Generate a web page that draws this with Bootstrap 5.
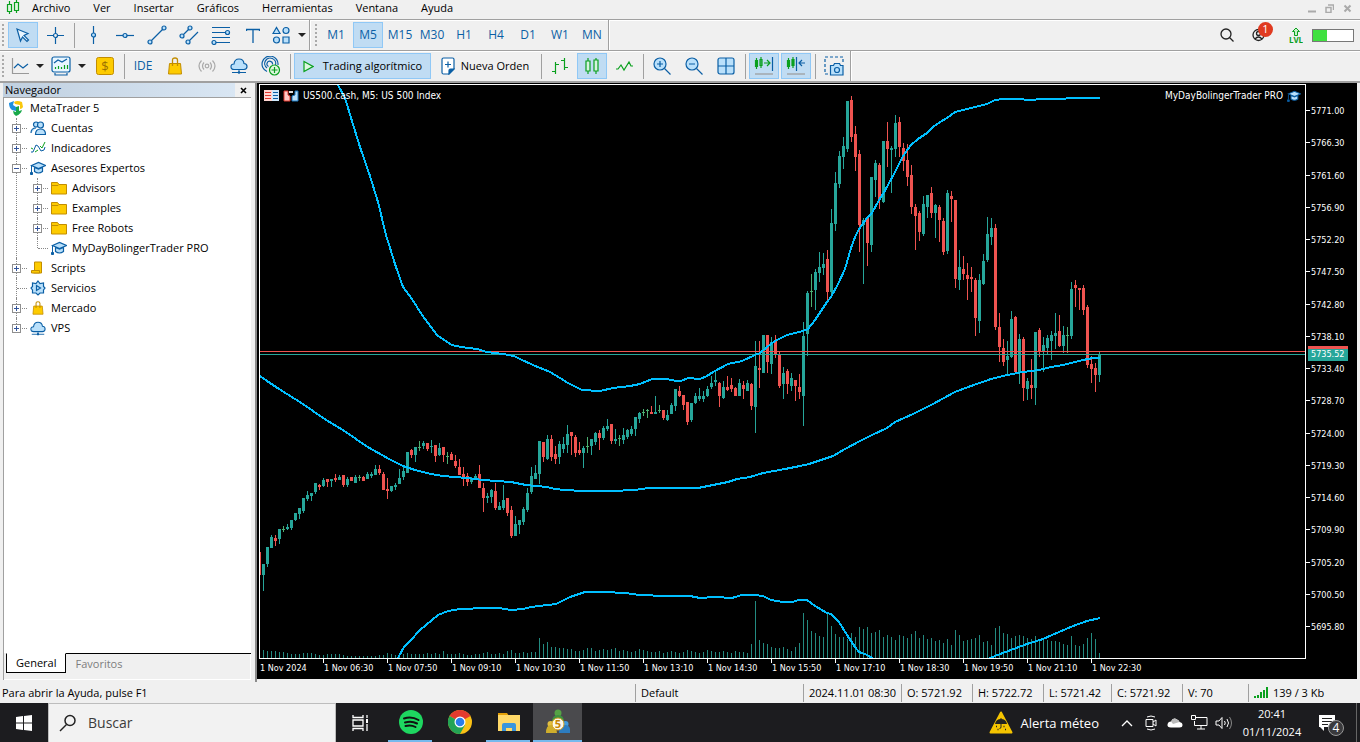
<!DOCTYPE html>
<html lang="es">
<head>
<meta charset="utf-8">
<meta name="viewport" content="width=device-width, initial-scale=1">
<title>MetaTrader 5</title>
<link rel="stylesheet" href="https://cdn.jsdelivr.net/npm/bootstrap@5.3.0/dist/css/bootstrap.min.css">
<style>
  :root { --ink:#0b5fa5; --sky:#b9e0fb; --leaf:#0aa01e; --line:#a0a0a0; --face:#f0f0f0; }
  body { font-family:"Open Sans","Noto Sans",sans-serif; font-size:11px; line-height:16px; color:#000; background:var(--face); overflow:hidden; }
  button, input { font:inherit; color:inherit; }
  button { background:none; border:0; padding:0; }
  svg { display:block; flex:none; }
  .ic { fill:none; stroke:var(--ink); stroke-width:1.2; }
  .f { fill:var(--sky); }
  .gr { stroke:var(--leaf); }
  .menu-bar { height:19px; }
  .menu-bar a { color:#000; text-decoration:none; line-height:16px; }
  .menu-links { gap:22px; font-size:11px; }
  .menu-links a { padding-right:1px; }
  .winctl { gap:9px; }
  .tool-row { height:31px; border-top:1px solid var(--line); box-shadow:inset 0 1px #fff; }
  .grip { width:7px; height:24px; background:radial-gradient(circle,#aaa 1px,transparent 1px) 1px 0/4px 4px repeat-y; }
  .tb { width:30px; height:26px; margin:0 1px; display:flex; align-items:center; justify-content:center; color:var(--ink); border:1px solid transparent; white-space:nowrap; }
  .tb.on { background:#c0dcf3; border-color:#90c8f6; }
  .tb.wide { width:39px; gap:7px; }
  .tb.shapes { width:38px; }
  .tb.tf, .tb.ide { font-size:12px; }
  .tb.algo { width:137px; color:#000; gap:9px; }
  .tb.order { width:104px; color:#000; gap:6px; }
  .vsep { width:6px; height:25px; background:linear-gradient(var(--line),var(--line)) 3px 0/1px 100% no-repeat; }
  .vend { width:4px; height:30px; border-left:1px solid var(--line); box-shadow:inset 1px 0 #fff; }
  .caret { width:0; height:0; border:4px solid transparent; border-top-color:#222; border-bottom:0; }
  .right-tools { padding-right:6px; }
  .right-tools .acct { margin-right:6px; }
  .acct-badge { left:6px; top:-6px; width:15px; height:15px; background:#e03a20; color:#fff; font-size:11px; line-height:14px; }
  .battery { width:42px; height:13px; border:1px solid #777; background:#fff; }
  .battery i { display:block; width:36%; height:100%; background:#3fe03f; }
  .work { border-top:2px solid var(--line); min-height:0; }
  .nav-pane { width:257px; padding:0 4px 2px 3px; border-right:2px solid #8c8c8c; }
  .nav-head { height:14px; }
  .nav-head span { background:linear-gradient(90deg,#c0d0e0,#d9e6f3); line-height:13px; padding-left:2px; margin-right:16px; }
  .tree-box { background:#fff; border-left:1px solid var(--line); border-top:1px solid var(--line); }
  .tree-box ul { list-style:none; margin:0; padding:0; }
  .tree-box li { position:relative; }
  .tree-box ul ul { margin-left:21px; }
  .tree-row { height:20px; display:flex; align-items:center; padding-left:8px; }
  .tree-row svg { margin-right:5px; }
  .rootrow { padding-left:4px; }
  .rootrow svg { margin-right:6px; }
  .tw { width:9px; height:9px; border:1px solid #8f8f8f; background:linear-gradient(#fff 3px,#33549a 3px,#33549a 4px,#fff 4px) 1px 0/5px 7px no-repeat #fff; margin-right:9px; position:relative; z-index:1; display:block; }
  .tw.plus::after { content:""; position:absolute; left:3px; top:1px; width:1px; height:5px; background:#33549a; }
  .tw.none { visibility:hidden; }
  .tree-box li::before { content:""; position:absolute; left:12px; top:0; bottom:0; border-left:1px dotted #888; }
  .tree-box li:last-child::before { bottom:auto; height:10px; }
  .tree-box li::after { content:""; position:absolute; left:13px; top:10px; width:10px; border-top:1px dotted #888; }
  .tabs { height:27px; box-shadow:inset -1px -1px #fff; border-left:1px solid var(--line); padding-left:2px; }
  .tabs button { height:20px; padding:0 9px; border-top:1px solid #000; color:#7d7d7d; }
  .tabs button.on { background:#fff; color:#000; border:1px solid #000; border-top-color:#fff; }
  .tabs .rest { border-top:1px solid #000; }
  .chart-pane { background:#000; color:#fff; font-family:"DejaVu Sans Condensed","DejaVu Sans",sans-serif; font-size:9px; line-height:11px; margin-right:3px; padding:1px 0 0 2px; margin-bottom:3px; }
  .chart-top { min-height:0; }
  .frame { border:1px solid #fff; min-height:0; min-width:0; }
  .frame > svg { width:100%; height:100%; }
  .cap { top:5px; height:11px; font-size:10px; }
  .price-axis { width:51px; padding:22px 0 26px; }
  .price-axis span::before { content:""; display:inline-block; width:4px; height:1px; background:#fff; vertical-align:3px; margin-right:1px; }
  .quote { left:2px; width:40px; height:12px; padding-left:3px; }
  .time-axis { height:20px; }
  .time-axis span { width:64px; flex:none; white-space:nowrap; border-left:1px solid #fff; height:4px; padding-top:4px; }
  .time-axis span:first-child { border-color:transparent; }
  .status { height:21px; }
  .status span { border-left:1px solid var(--line); height:18px; line-height:18px; padding-left:5px; white-space:nowrap; overflow:hidden; }
  .status .s0 { border:0; padding-left:2px; }
  .w168{width:168px}.w98{width:98px}.w71{width:71px}.w68{width:68px}.w66{width:66px}.w112{width:112px}
  .task { height:39px; background:#1c1c1f; color:#fff; font-size:13px; }
  .task button { color:#fff; height:39px; display:flex; align-items:center; justify-content:center; }
  .start { width:48px; }
  .find { width:288px; background:#f2f2f2; border:1px solid #bdbdbd; border-bottom:0; padding-left:10px; gap:11px; color:#333; font-size:14px; }
  .find input { background:none; border:0; outline:0; padding:0; min-width:0; }
  .find input::placeholder { color:#3c3c3c; opacity:1; }
  .app { width:49px; border-bottom:2px solid transparent; }
  .app:first-of-type { margin-left:0; }
  .views { width:50px; }
  .app.run { border-image:linear-gradient(90deg,transparent 4px,#76b9ed 4px,#76b9ed 44px,transparent 44px) 2; }
  .app.cur { background:#4a4a4d; border-bottom-color:#76b9ed; }
  .tray { width:24px; }
  .clock { width:74px; font-size:11px; line-height:18px; }
  .note { margin:0 20px 0 5px; }
  .n4 { left:14px; top:17px; width:16px; height:16px; background:#3a3a3d; border:1px solid #999; font-size:12px; line-height:14px; }
  .edge { border-left:1px solid #666; width:4px; }
</style>
</head>
<body class="d-flex flex-column vh-100">
<svg width="0" height="0" class="position-absolute" aria-hidden="true">
  <symbol id="hat" viewBox="0 0 16 14"><path d="M1.500 4.500L8.500 1.500l7 3-7 3zM4.500 6.500v4q4 3 8 0v-4l-4 1.500z" fill="#b9e0fb" stroke="#0b5fa5" stroke-width="1.200"/><path d="M1.500 5v6M.500 11.500h2v2h-2z" stroke="#0b5fa5" fill="#0b5fa5"/></symbol>
  <symbol id="folder" viewBox="0 0 16 14"><path d="M.500 13V1.500h6l1.500 2h7.500V13z" fill="#fdcb00" stroke="#c28d00"/><path d="M1 4.500h6l1-1" stroke="#c28d00" fill="none"/></symbol>
  <symbol id="bag" viewBox="0 0 16 18"><path d="M2.500 6.500h11l1 10.500h-13z" fill="#fdcb00" stroke="#c28d00"/><path d="M5.500 9V3q0-2 2.500-2t2.500 2v6" fill="none" stroke="#c28d00" stroke-width="1.300"/></symbol>
  <symbol id="cloud" viewBox="0 0 18 16"><path d="M4 11.500q-3 0-3-2.800t3-2.700q.500-5 5-5t5 4.500q3 .200 3 3t-3 3z" fill="#b9e0fb" stroke="#0b5fa5" stroke-width="1.200"/><path d="M9 12v2M2 14.500h14" stroke="#0b5fa5"/><circle cx="9" cy="14.500" r="1.300" fill="#0b5fa5"/></symbol>
</svg>

<nav class="menu-bar d-flex align-items-start flex-none">
  <svg width="16" height="16" class="ic gr ms-1 me-2" viewBox="0 0 16 16"><path d="M5.500 1v13M12.500 0v13"/><path d="M3.500 4.500h4v7h-4zM10.500 2.500h4v8h-4z" fill="#dff5df"/></svg>
  <div class="menu-links d-flex ps-1">
    <a href="#">Archivo</a><a href="#">Ver</a><a href="#">Insertar</a><a href="#">Gráficos</a><a href="#">Herramientas</a><a href="#">Ventana</a><a href="#">Ayuda</a>
  </div>
  <div class="d-flex ms-auto winctl pe-2 pt-1">
    <button aria-label="Minimizar"><svg width="9" height="9"><path d="M1 7.500h8" stroke="#aaa" stroke-width="2"/></svg></button>
    <button aria-label="Restaurar"><svg width="9" height="9"><path d="M1 3.500h5v5H1zM3 1h5.500v5" fill="none" stroke="#aaa" stroke-width="1.500"/></svg></button>
    <button aria-label="Cerrar"><svg width="9" height="9"><path d="M1.500 1.500l6 6M7.500 1.500l-6 6" stroke="#aaa" stroke-width="2"/></svg></button>
  </div>
</nav>

<div class="tool-row d-flex align-items-center flex-none">
  <div class="grip"></div>
  <button class="tb on" aria-label="Cursor"><svg width="16" height="16" class="ic f"><path d="M2 2l11 4.500-4 2 4.500 4.500-1.500 1.500L7.500 10l-2 4z" fill="#eaf6ff"/></svg></button>
  <button class="tb" aria-label="Cruz"><svg width="17" height="17" class="ic"><path d="M8.500 0v6.500M8.500 10.500V17M0 8.500h6.500M10.500 8.500H17"/><circle cx="8.500" cy="8.500" r="2"/></svg></button>
  <div class="vsep"></div>
  <button class="tb" aria-label="Línea vertical"><svg width="17" height="18" class="ic"><path d="M8.500 0v18"/><circle class="f" cx="8.500" cy="9" r="2"/></svg></button>
  <button class="tb" aria-label="Línea horizontal"><svg width="18" height="17" class="ic"><path d="M0 8.500h18"/><circle class="f" cx="9" cy="8.500" r="2"/></svg></button>
  <button class="tb" aria-label="Tendencia"><svg width="20" height="20" class="ic"><path d="M3 17L17 3"/><circle class="f" cx="3" cy="17" r="2"/><circle class="f" cx="17" cy="3" r="2"/></svg></button>
  <button class="tb" aria-label="Canal"><svg width="20" height="20" class="ic"><path d="M3 11l8-8M8 18L19 7"/><circle class="f" cx="3" cy="11" r="2"/><circle class="f" cx="11" cy="3" r="2"/><circle class="f" cx="9" cy="17" r="2"/></svg></button>
  <button class="tb" aria-label="Fibonacci"><svg width="20" height="20" class="ic"><path d="M1 2.500h18M1 7.500h18M1 12.500h18M1 17.500h18"/><circle class="f" cx="16.500" cy="7.500" r="2"/><circle class="f" cx="3" cy="17.500" r="2"/></svg></button>
  <button class="tb" aria-label="Texto"><svg width="14" height="15" class="ic"><path d="M.500 3V1.500h13V3M7 1.500V15" stroke-width="1.300"/></svg></button>
  <button class="tb shapes" aria-label="Objetos"><svg width="18" height="18" class="ic"><g class="f"><path d="M1 7.500l3.500-6 3.500 6z"/><circle cx="14" cy="4.500" r="3"/><circle cx="4.500" cy="14" r="3"/><path d="M11 11h6v6h-6z"/></g></svg><i class="caret ms-2"></i></button>
  <div class="vend"></div>
  <div class="grip"></div>
  <button class="tb tf">M1</button><button class="tb tf on">M5</button><button class="tb tf">M15</button><button class="tb tf">M30</button><button class="tb tf">H1</button><button class="tb tf">H4</button><button class="tb tf">D1</button><button class="tb tf">W1</button><button class="tb tf">MN</button>
  <div class="vend"></div>
  <div class="right-tools d-flex align-items-center ms-auto">
    <button class="tb" aria-label="Buscar"><svg width="14" height="14" fill="none" stroke="#222" stroke-width="1.300"><circle cx="6" cy="6" r="5"/><path d="M9.500 9.500l4 4"/></svg></button>
    <button class="tb acct" aria-label="Cuenta"><span class="position-relative"><svg width="14" height="14" fill="none" stroke="#222" stroke-width="1.300"><circle cx="6.500" cy="7" r="5.500"/><circle cx="6.500" cy="5.500" r="2"/><path d="M3 11q3.500-4 7 0"/></svg><b class="acct-badge position-absolute rounded-circle text-center fw-normal">1</b></span></button>
    <button class="tb" aria-label="LVL"><svg width="14" height="17"><path d="M7 1l3.500 3.500h-2v4h-3v-4h-2z" fill="#c6f3c6" stroke="#0aa01e"/><text x="7" y="16" text-anchor="middle" font-size="8" font-weight="700" fill="#0aa01e">LVL</text></svg></button>
    <div class="battery"><i></i></div>
  </div>
</div>

<div class="tool-row d-flex align-items-center flex-none">
  <div class="grip"></div>
  <button class="tb wide" aria-label="Línea"><svg width="18" height="18" class="ic"><path d="M1.500 1v15.500H18" stroke="#999"/><path d="M3 11l4-4 5 4 5-4"/></svg><i class="caret"></i></button>
  <button class="tb wide" aria-label="Plantillas"><svg width="20" height="20" class="ic"><rect x="1" y="1" width="18" height="15" rx="2" fill="#e8f6ff"/><path d="M4 17v2h12v-2M3 7l4-3 4 2 5-3"/><path class="gr" d="M4.500 13v-2M7.500 13v-3M10.500 13v-2M13.500 13V9M16.500 13v-4"/></svg><i class="caret"></i></button>
  <button class="tb" aria-label="Símbolos"><svg width="18" height="18"><rect x=".5" y=".5" width="17" height="17" rx="2" fill="#fdcb00" stroke="#c28d00"/><text x="9" y="14" text-anchor="middle" font-size="13" fill="#9b7000">$</text></svg></button>
  <div class="vsep"></div>
  <button class="tb ide">IDE</button>
  <button class="tb" aria-label="Mercado"><svg width="16" height="18"><use href="#bag"/></svg></button>
  <button class="tb" aria-label="Señales"><svg width="18" height="16" fill="none" stroke="#aaa" stroke-width="1.200"><circle cx="9" cy="8" r="1.800"/><path d="M6 4.500q-3 3.500 0 7M12 4.500q3 3.500 0 7M3.500 2.500q-5 5.500 0 11M14.500 2.500q5 5.500 0 11"/></svg></button>
  <button class="tb" aria-label="VPS"><svg width="18" height="16"><use href="#cloud"/></svg></button>
  <button class="tb" aria-label="Copy"><svg width="20" height="20" class="ic"><path d="M6 15.500A8 8 0 1 1 17 9M6 12A5.500 5.500 0 1 1 14.500 9M7.500 10.500a2.800 2.800 0 1 1 4-2"/><circle cx="13.500" cy="14" r="5" fill="#dff7df" class="gr"/><path class="gr" d="M10.500 14h6M13.500 11v6"/></svg></button>
  <div class="vsep"></div>
  <button class="tb on algo"><svg width="11" height="13" class="ic gr"><path d="M1 1.500l9 5-9 5z" fill="#dff7df"/></svg>Trading algorítmico</button>
  <button class="tb order"><svg width="14" height="18" class="ic"><path d="M1 2.500q0-1.500 1.500-1.500h9Q13 1 13 2.500V12l-5 5H2.500Q1 17 1 15.500z" fill="#fff"/><path d="M13 12H9.500q-1.500 0-1.500 1.500V17z" fill="#0b5fa5"/><path d="M4 7.500h6M7 4.500v6"/></svg>Nueva Orden</button>
  <div class="vsep"></div>
  <button class="tb" aria-label="Barras"><svg width="18" height="18" class="ic gr"><path d="M4.500 5v12M1 14.500h3.500M4.500 7.500H8M13.500 1v12M10 3.500h3.500M13.500 10.500H17"/></svg></button>
  <button class="tb on" aria-label="Velas"><svg width="16" height="18" class="ic gr"><path d="M4 1v16M12 1v16"/><path d="M2 4h4v10H2zM10 3h4v11h-4z" fill="#d6f3df"/></svg></button>
  <button class="tb" aria-label="Línea"><svg width="18" height="14" class="ic gr"><path d="M1 10h2l3-4 3 5 5-8 2 4h2"/></svg></button>
  <div class="vsep"></div>
  <button class="tb" aria-label="Acercar"><svg width="18" height="18" class="ic"><circle class="f" cx="7" cy="7" r="6"/><path d="M11.500 11.500l6 6M4 7h6M7 4v6"/></svg></button>
  <button class="tb" aria-label="Alejar"><svg width="18" height="18" class="ic"><circle class="f" cx="7" cy="7" r="6"/><path d="M11.500 11.500l6 6M4 7h6"/></svg></button>
  <button class="tb" aria-label="Mosaico"><svg width="18" height="18" class="ic"><rect class="f" x="1" y="1" width="16" height="16" rx="2"/><path d="M9 1v16M1 9h16"/></svg></button>
  <div class="vsep"></div>
  <button class="tb on" aria-label="Desplazar"><svg width="20" height="20" class="ic"><path d="M2.500 2v11M7 1v11" class="gr"/><path d="M1.500 4.500h2v6h-2zM6 3.500h2v6H6zM10 7h6M13 4l3 3-3 3" class="gr"/><path d="M18.500 1v14"/><path d="M1 18h18" stroke="#999"/></svg></button>
  <button class="tb on" aria-label="Margen"><svg width="20" height="20" class="ic"><path d="M2.500 2v11M7 1v11M1.500 4.500h2v6h-2zM6 3.500h2v6H6z" class="gr"/><path d="M10.500 1v14M19 7h-6M16 4l-3 3 3 3"/><path d="M1 18h18" stroke="#999"/></svg></button>
  <div class="vsep"></div>
  <button class="tb" aria-label="Captura"><svg width="20" height="20" class="ic"><path d="M4 18H1V1h18v6" stroke-dasharray="3 2"/><path class="f" d="M6.500 9.500h3l1-2h5l1 2h2.500V19H6.500z"/><circle cx="13" cy="14" r="2.500"/></svg></button>
  <div class="vend"></div>
</div>

<main class="work d-flex flex-grow-1">
  <aside class="nav-pane d-flex flex-column flex-shrink-0">
    <div class="nav-head d-flex position-relative"><span class="flex-grow-1">Navegador</span>
      <button class="position-absolute end-0 top-0 mt-1 me-1" aria-label="Cerrar panel"><svg width="7" height="8"><path d="M1 1l5 5M6 1L1 6" stroke="#000" stroke-width="1.600"/></svg></button></div>
    <div class="tree-box flex-grow-1">
      <div class="tree-row rootrow"><svg width="16" height="16" viewBox="0 0 16 16"><path d="M1 3l5-2-1 4 3 2v4L4 10Q1 8 1 3z" fill="#1f8fe0"/><path d="M6 2q3-2 8 0l1 5q-1 2-3 2V5L7 4z" fill="#f9c80e"/><path d="M5 11l3 1V7l3-1v5l3-1q-1 4-6 6-3-2-3-5z" fill="#19a84a"/></svg>MetaTrader 5</div>
      <ul>
        <li><div class="tree-row"><button class="tw plus" aria-label="Abrir"></button><svg width="16" height="16" class="ic f"><circle cx="6" cy="4.500" r="2.500"/><path d="M1 13q0-5 5-5"/><circle cx="10.500" cy="5" r="3"/><path d="M5.500 14.500q0-5.500 5-5.500t5 5.500z"/></svg>Cuentas</div></li>
        <li><div class="tree-row"><button class="tw plus" aria-label="Abrir"></button><svg width="16" height="14" fill="none"><path d="M1 11h2l3-7 2 1 3 5 3-1 1-3" stroke="#0b5fa5"/><path d="M1 7l2 1M5 11l3-2M10 5l2 2 3-6" stroke="#0aa01e"/></svg>Indicadores</div></li>
        <li><div class="tree-row"><button class="tw" aria-label="Contraer"></button><svg width="16" height="14"><use href="#hat"/></svg>Asesores Expertos</div>
          <ul>
            <li><div class="tree-row"><button class="tw plus" aria-label="Abrir"></button><svg width="16" height="14"><use href="#folder"/></svg>Advisors</div></li>
            <li><div class="tree-row"><button class="tw plus" aria-label="Abrir"></button><svg width="16" height="14"><use href="#folder"/></svg>Examples</div></li>
            <li><div class="tree-row"><button class="tw plus" aria-label="Abrir"></button><svg width="16" height="14"><use href="#folder"/></svg>Free Robots</div></li>
            <li><div class="tree-row"><i class="tw none"></i><svg width="16" height="14"><use href="#hat"/></svg>MyDayBolingerTrader PRO</div></li>
          </ul></li>
        <li><div class="tree-row"><button class="tw plus" aria-label="Abrir"></button><svg width="16" height="14"><path d="M4.500 1h7v11h-8V9.500h1z" fill="#fdcb00" stroke="#c28d00"/><path d="M1.500 9.500h8V12h-8z" fill="#fdcb00" stroke="#c28d00"/></svg>Scripts</div></li>
        <li><div class="tree-row"><i class="tw none"></i><svg width="16" height="16" class="ic f"><path d="M8 1l2 2.500 3.500-.500v3.500L15 8l-1.500 2v3H10L8 15l-2-2H2.500v-3L1 8l1.500-1.500V3L6 3.500z"/><path d="M6.500 5.500v5l4-2.500z"/></svg>Servicios</div></li>
        <li><div class="tree-row"><button class="tw plus" aria-label="Abrir"></button><svg width="16" height="14"><use href="#bag"/></svg>Mercado</div></li>
        <li><div class="tree-row"><button class="tw plus" aria-label="Abrir"></button><svg width="16" height="15"><use href="#cloud"/></svg>VPS</div></li>
      </ul>
    </div>
    <div class="tabs d-flex align-items-start"><button class="on">General</button><button>Favoritos</button><div class="rest flex-grow-1"></div></div>
  </aside>

  <section class="chart-pane d-flex flex-column flex-grow-1">
    <div class="chart-top d-flex flex-grow-1">
      <div class="frame flex-grow-1 position-relative">
        <svg id="plot" viewBox="260 85 1045 573" preserveAspectRatio="none" shape-rendering="crispEdges"></svg>
        <div class="cap position-absolute start-0 d-flex align-items-center ps-1">
          <svg width="15" height="11" class="me-1"><path d="M0 0h8v11H0z" fill="#ffd6d2"/><path d="M8 0h7v11H8z" fill="#cfe8fb"/><path d="M1 2.500h6M1 5.500h6M1 8.500h6" stroke="#e0362c"/><path d="M9 2.500h5M9 5.500h5M9 8.500h5" stroke="#0b5fa5"/></svg>
          <svg width="16" height="12" class="me-1"><path d="M1 1h4v4l2 1v5H1z" fill="#ffc9c5" stroke="#e0362c"/><path d="M15 1h-3v4L9 6v5h6z" fill="#b9e0fb" stroke="#1b76bd"/><path d="M6 1h4v2H6z" fill="#ddd"/></svg>
          <span>US500.cash, M5: US 500 Index</span>
        </div>
        <div class="cap position-absolute end-0 d-flex align-items-center pe-1">
          <span class="me-1">MyDayBolingerTrader PRO</span><svg width="14" height="12"><use href="#hat"/></svg>
        </div>
      </div>
      <div class="price-axis position-relative d-flex flex-column justify-content-between" id="prices"></div>
    </div>
    <div class="time-axis d-flex overflow-hidden" id="times"></div>
  </section>
</main>

<footer class="status d-flex align-items-center flex-none">
  <span class="s0 flex-grow-1">Para abrir la Ayuda, pulse F1</span>
  <span class="w168">Default</span><span class="w98">2024.11.01 08:30</span><span class="w71">O: 5721.92</span><span class="w71">H: 5722.72</span><span class="w68">L: 5721.42</span><span class="w71">C: 5721.92</span><span class="w66">V: 70</span>
  <span class="w112 d-flex align-items-center"><svg width="15" height="12" class="me-1"><path d="M1 11V9M4 11V8M7 11V5M10 11V3M13 11V0" stroke="#0aa01e" stroke-width="2"/></svg>139 / 3 Kb</span>
</footer>

<div class="task d-flex align-items-stretch flex-none">
  <button class="start" aria-label="Inicio"><svg width="16" height="16" fill="#fff"><path d="M0 2l7-1v6.500H0zM8 1l8-1v7.500H8zM0 8.500h7V15l-7-1zM8 8.500h8V16l-8-1z"/></svg></button>
  <label class="find d-flex align-items-center"><svg width="18" height="18" fill="none" stroke="#222" stroke-width="1.500"><circle cx="11" cy="6.500" r="5"/><path d="M7.500 10.500L1 17"/></svg><input type="text" placeholder="Buscar" aria-label="Buscar"></label>
  <button class="views" aria-label="Vista de tareas"><svg width="18" height="16" fill="none" stroke="#fff" stroke-width="1.300"><path d="M1 0v2.500h10V0M1 5h10v6H1zM1 16v-2.500h10V16M15 0v3M15 9v7"/><path d="M14 4h2v4h-2z" fill="#fff" stroke="none"/></svg></button>
  <button class="app run" aria-label="Spotify"><svg width="24" height="24"><circle cx="12" cy="12" r="12" fill="#1ed760"/><path d="M5 8.500q7.500-2.500 14.500 1.500M6 12.500q6.500-2 12 1M6.500 16q5.500-1.500 10 1" fill="none" stroke="#111" stroke-width="2" stroke-linecap="round"/></svg></button>
  <button class="app" aria-label="Chrome"><svg width="24" height="24"><circle cx="12" cy="12" r="12" fill="#fbc116"/><path d="M12 12L1.600 6A12 12 0 0 1 22.400 6z" fill="#e33b2e"/><path d="M1.600 6A12 12 0 0 0 12 24l5-9-5-3z" fill="#23a455"/><circle cx="12" cy="12" r="5.500" fill="#fff"/><circle cx="12" cy="12" r="4.300" fill="#2b7de9"/></svg></button>
  <button class="app run" aria-label="Explorador"><svg width="22" height="20"><path d="M0 1h9l2 3H0z" fill="#e3a008"/><path d="M0 3h22v16H0z" fill="#ffd968"/><path d="M4 19v-6q0-2 2-2h10q2 0 2 2v6h-4v-3H8v3z" fill="#3a96dd"/></svg></button>
  <button class="app cur" aria-label="MetaTrader 5"><svg width="24" height="26"><circle cx="12" cy="4" r="3.500" fill="#55a345"/><path d="M6 13q0-7 6-7t6 7v2H6z" fill="#3f9140"/><circle cx="4.500" cy="15" r="3" fill="#e3c040"/><circle cx="19.500" cy="15" r="3" fill="#3f9be0"/><path d="M0 24q0-8 5-8t6 8z" fill="#cfae2c"/><path d="M13 24q0-8 6-8t5 8z" fill="#2d7dc0"/><circle cx="12" cy="15" r="6" fill="#fbf8ec" stroke="#d8a020"/><text x="12" y="19" text-anchor="middle" font-size="11" font-weight="700" fill="#c98500">5</text></svg></button>
  <div class="d-flex align-items-center ms-auto">
    <svg width="24" height="23"><path d="M12 1.500l10.500 20h-21z" fill="#f5c400" stroke="#f5c400" stroke-width="2" stroke-linejoin="round"/><path d="M6 13q1-5 6-5t6 5z" fill="#222"/><path d="M12 7v9q0 1.500-1.500 1.500" fill="none" stroke="#222"/><path d="M7 15.500h1M8.500 18.500h1M14.500 15.500h1M16 18.500h1" stroke="#222" stroke-width="1.500"/></svg>
    <span class="mx-2">Alerta méteo</span>
    <button class="tray ms-2" aria-label="Iconos ocultos"><svg width="12" height="8" fill="none" stroke="#fff" stroke-width="1.300"><path d="M1 7l5-5 5 5"/></svg></button>
    <button class="tray" aria-label="Cámara"><svg width="12" height="16" fill="none" stroke="#fff"><path d="M2 2q4-2 8 0M2 14q4 2 8 0M1 4.500h7v7H1zM8 7l3-2v6L8 9"/></svg></button>
    <button class="tray" aria-label="OneDrive"><svg width="16" height="11"><path d="M4 10.500q-4 0-3.500-3T4 4.500Q6 0 10 2.500q2 .500 2.500 2.500 3 .500 3 3t-3 2.500z" fill="#fff"/><path d="M4 4.500q2-4.500 6-2 2 .500 2.500 2.500L6 7z" fill="#bbb"/></svg></button>
    <button class="tray" aria-label="Red"><svg width="17" height="15" fill="none" stroke="#fff"><path d="M5 2.500h11v8H3.500V6M10 11v3M6 14h8M.500.500h4v4h-4z"/></svg></button>
    <button class="tray" aria-label="Volumen"><svg width="17" height="14" fill="none" stroke="#fff"><path d="M1 5h3l3-3.500v11L4 9H1zM9.500 5q1.500 2 0 4M12 3q3 4 0 8"/><path d="M14.500 1q4 6 0 12" stroke="#888"/></svg></button>
    <div class="clock text-center"><div>20:41</div><div>01/11/2024</div></div>
    <button class="note position-relative ps-1" aria-label="Notificaciones"><svg width="18" height="17"><path d="M1 1h16v12H6v4l-4-4H1z" fill="#fff"/><path d="M4 4.500h10M4 7.500h10M4 10.500h6" stroke="#222"/></svg><span class="n4 position-absolute rounded-circle">4</span></button>
    <div class="edge h-100"></div>
  </div>
</div>

<script src="https://cdn.jsdelivr.net/npm/bootstrap@5.3.0/dist/js/bootstrap.bundle.min.js"></script>
<script>
// One candle per entry: kind (g up, r down, d doji), high, body top, body bottom, low.
const candles = `r552,552,575,575 g564,564,575,591 g547,547,564,567 g535,537,548,548 r535,538,541,546 g529,529,539,544 d526,529,530,532 g524,527,529,530 g520,520,528,530 g513,513,520,521 g508,508,514,519 g498,498,511,513 g491,495,499,501 g493,493,496,501 g483,483,492,494 r484,485,487,490 g478,480,486,487 r479,479,482,487 g479,479,481,487 r474,478,480,482 g475,477,480,480 r475,475,485,487 g477,479,485,487 r477,477,481,481 g475,477,483,483 d475,477,478,481 r476,477,481,481 g472,474,479,479 g472,474,476,478 g465,469,475,475 r465,469,473,475 r472,474,490,490 r478,489,491,499 g486,486,491,492 g483,485,487,490 g469,478,484,484 g466,471,477,480 g452,452,473,473 r449,450,455,458 g447,447,455,462 d441,447,448,451 g441,443,446,449 r443,443,449,451 g440,446,447,453 r445,445,456,462 g443,448,455,456 r447,447,455,462 d452,456,457,464 r452,454,460,460 r455,461,466,468 r459,467,475,475 r467,474,478,486 r473,476,482,486 g477,479,482,484 g474,476,480,480 r465,474,488,488 r483,488,498,512 g493,496,498,503 g489,490,497,503 r483,491,508,510 g502,506,510,510 g485,500,508,510 r498,498,513,516 r506,510,536,538 g516,524,536,536 g520,520,525,534 g507,509,522,525 g488,493,510,512 g467,476,492,494 g465,473,479,479 g441,441,474,484 r442,442,457,462 g435,439,459,460 r435,439,457,461 r446,454,459,464 g441,444,457,464 g437,444,449,453 g425,434,445,453 r432,432,436,455 r435,437,453,457 r442,450,453,455 g446,448,453,468 d437,446,447,453 g439,439,446,455 g432,433,442,445 r430,433,438,450 g426,428,438,440 g419,426,429,431 r424,424,441,444 g429,439,441,444 d435,438,439,446 g428,435,440,444 g429,430,437,439 g426,429,434,436 g417,417,429,436 g412,413,419,423 d409,412,413,416 d409,410,411,418 r406,412,414,414 g396,412,414,414 d405,410,411,413 r410,410,418,420 g410,415,420,421 g403,405,414,414 g389,389,406,411 r386,391,396,397 r395,395,405,410 r402,402,422,425 g403,403,420,422 g393,396,403,404 g388,396,399,401 g391,396,399,402 g386,389,396,397 g376,383,387,389 g371,380,382,386 r382,383,396,407 g381,387,398,399 r376,387,390,391 r378,385,389,392 r387,388,396,396 g379,383,396,396 r381,385,389,399 g380,383,391,391 r383,384,406,410 g341,366,407,433 r341,368,370,388 g335,335,373,373 r335,335,362,373 g337,342,364,374 r335,341,354,358 r352,354,386,388 g367,373,384,399 r369,371,384,394 g373,378,386,391 r380,380,386,401 r374,387,392,399 g322,336,396,426 g291,293,334,356 d274,291,292,307 g269,272,290,310 g252,267,273,282 g253,264,268,275 r250,259,292,300 g209,223,292,297 g172,183,224,231 g151,156,184,188 g137,146,157,169 g101,101,149,152 r96,100,137,142 r126,134,157,171 r150,154,225,252 g218,220,225,284 r216,218,243,266 g177,177,245,252 g160,163,180,197 r163,165,199,209 g141,141,202,203 r122,141,149,167 g146,148,150,193 g115,123,149,157 r117,122,147,157 r143,148,161,171 r144,160,177,186 r165,175,207,214 r204,207,216,250 r211,213,232,241 g196,204,234,236 g195,195,207,218 r187,193,213,218 g204,205,213,238 r205,207,220,242 r218,221,252,255 g190,193,251,254 r191,196,199,222 r200,200,279,288 g250,267,280,290 r256,269,274,280 r263,275,279,300 r267,277,279,292 r278,280,318,336 g274,280,321,333 g254,261,284,285 g217,234,260,262 g218,228,237,245 r224,228,327,330 r313,327,347,362 r339,348,362,366 g341,356,360,374 g311,319,357,358 r316,317,372,374 g334,339,373,384 r337,339,388,401 g378,381,389,400 r359,385,388,399 g332,332,388,405 r328,330,351,357 g337,345,351,372 g335,338,348,354 g331,335,341,360 g313,333,336,349 r315,331,346,347 g326,335,346,353 d327,335,336,353 g282,289,336,339 r280,285,288,307 r288,288,290,310 r285,288,310,315 r305,307,365,368 r356,364,369,383 r363,368,375,392 g352,355,375,382`.split(/\s+/);
const volumes = [0,8,7,7,7,6,6,5,4,4,4,5,5,5,4,3,3,4,4,4,4,3,2,2,2,2,2,2,2,2,3,3,5,4,3,4,4,5,4,4,4,4,5,4,5,4,7,4,4,4,5,4,3,3,4,4,5,6,4,4,5,4,7,8,5,5,6,5,6,6,20,14,16,11,11,10,10,9,9,7,7,8,10,10,7,8,9,8,9,10,7,8,7,6,7,9,8,7,6,6,7,5,6,7,6,5,6,8,7,6,5,6,8,7,6,6,7,6,5,7,6,6,5,14,57,18,15,14,11,10,10,11,9,7,11,15,45,38,27,25,22,21,44,32,24,21,21,19,25,21,31,29,31,25,26,28,21,23,21,18,23,22,20,24,27,20,23,19,20,17,18,15,19,13,28,23,17,18,19,20,23,16,17,13,30,32,25,24,20,22,23,22,20,19,22,19,18,18,17,17,16,14,13,22,13,12,14,20,25,19,5];
const bands = [
 "338,85 345,98 352,121 360,147 370,176 378,202 386,235 395,264 403,287 412,299 422,315 431,327 437,335 444,340 452,345 461,347 477,349 487,352 503,354 514,356 520,359 533,365 550,372 560,378 568,383 582,390 600,391 613,388 630,386 640,384 652,379 667,379 676,381 681,381 688,378 700,379 707,376 713,372 728,364 742,361 755,355 760,353 767,347 775,341 787,335 803,331 808,329 815,320 827,302 831,297 838,284 845,269 851,248 855,237 859,229 867,218 872,213 879,200 883,194 888,185 895,172 903,156 911,145 918,139 927,133 933,127 940,122 947,118 955,112 963,110 971,108 979,106 987,104 995,100 1003,99 1018,99 1030,100 1043,99 1058,99 1075,98 1100,98",
 "260,376 267,381 279,389 303,404 323,418 346,432 366,446 389,459 403,466 415,470 431,474 443,476 467,478 483,480 511,482 526,485 547,487 555,489 565,490 582,491 612,491 635,490 648,488 698,488 713,485 728,482 737,479 750,477 763,473 785,469 800,466 809,464 833,456 845,449 860,441 872,435 887,428 895,422 913,414 933,404 955,392 971,386 991,379 1007,375 1023,372 1039,370 1051,367 1063,365 1075,362 1083,360 1093,358 1100,358",
 "398,658 404,647 411,640 420,630 432,620 438,615 448,611 460,609 486,608 499,608 511,610 523,609 531,607 556,604 570,597 585,592 605,592 625,593 640,595 665,596 690,596 700,598 715,597 732,598 742,595 755,595 763,596 771,600 783,602 792,602 799,600 807,600 815,606 827,613 831,614 839,622 847,635 855,647 859,652 867,655 874,659",
 "988,659 995,656 1011,650 1027,644 1043,639 1059,632 1073,626 1087,621 1100,618"];
const tone = {g:"#26a69a", r:"#ef5350", d:"#4caf72"};
const rect = (x,y,w,h,c) => `<rect x="${x}" y="${y}" width="${w}" height="${h}" fill="${c}"/>`;
let out = "";
volumes.forEach((v,i) => out += rect(259+4*i, 658-v, 1, v, "#238a80"));
candles.forEach((s,i) => {
  const x = 259+4*i, c = tone[s[0]], [h,t,b,l] = s.slice(1).split(",").map(Number);
  out += rect(x, h, 1, l-h, c) + rect(x-1, t, 3, b-t, c);
});
out += rect(260,351,1045,1,"#ef5350") + rect(260,354,1045,1,"#26a69a");
bands.forEach(p => out += `<polyline points="${p}" fill="none" stroke="#00bfff" stroke-width="2"/>`);
document.getElementById("plot").innerHTML = out;

const prices = ["5771.00","5766.30","5761.60","5756.90","5752.20","5747.50","5742.80","5738.10","5733.40","5728.70","5724.00","5719.30","5714.60","5709.90","5705.20","5700.50","5695.80"];
const at = y => ((y-84)/575*100)+"%";
document.getElementById("prices").innerHTML = prices.map(p => `<span>${p}</span>`).join("") +
  `<div class="quote position-absolute" style="top:${at(346)};background:#ef5350"></div><div class="quote position-absolute" style="top:${at(349)};background:#26a69a">5735.52</div>`;
document.getElementById("times").innerHTML = ["2024","06:30","07:50","09:10","10:30","11:50","13:10","14:30","15:50","17:10","18:30","19:50","21:10","22:30"].map(t => `<span>1 Nov ${t}</span>`).join("");
</script>
</body>
</html>
